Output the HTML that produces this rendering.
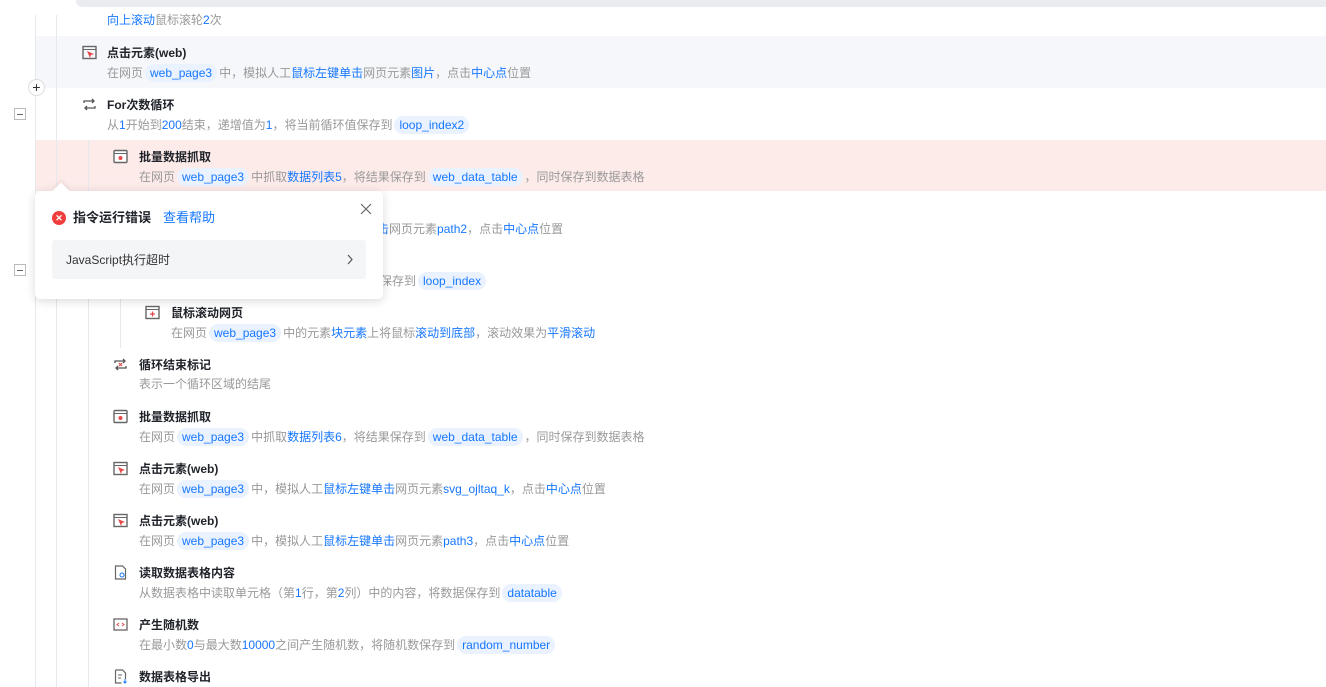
<!DOCTYPE html>
<html><head><meta charset="utf-8"><style>
*{margin:0;padding:0;box-sizing:border-box}
body{width:1326px;height:687px;overflow:hidden;background:#fff;position:relative;font-family:"Liberation Sans","Noto Sans CJK SC",sans-serif;font-size:12px}
.a{position:absolute;white-space:nowrap}
.t{font-weight:bold;color:#1f2329;font-size:12px;line-height:16px;margin-top:1px}
.d{color:#999;font-size:12px;line-height:18px;margin-top:1px}
.b{color:#1677ff}
.g{background:#eaf2ff;color:#1677ff;border-radius:9px;padding:0 5px;margin:0 2px;display:inline-block;line-height:18px}
.vl{position:absolute;width:1px;background:#e8e9ec}
.ic{position:absolute;width:15px;height:15px}
</style></head><body>
<div class="a" style="left:76px;top:0;width:1250px;height:7px;background:#ebecf0;border-bottom-left-radius:6px"></div>
<div class="a" style="left:35px;top:36px;width:1291px;height:52px;background:#f6f7fb"></div>
<div class="a" style="left:35px;top:140px;width:1291px;height:51px;background:#fdebea"></div>
<div class="vl" style="left:35px;top:15px;height:672px"></div>
<div class="vl" style="left:56px;top:15px;height:672px"></div>
<div class="vl" style="left:88px;top:140px;height:547px"></div>
<div class="vl" style="left:120px;top:190px;height:158px"></div>

<div class="a d" style="left:107px;top:10px"><span class="b">向上滚动</span>鼠标滚轮<span class="b">2</span>次</div>

<svg class="ic" style="left:82px;top:45px" viewBox="0 0 15 15"><rect x="1" y="1.5" width="13" height="12" fill="none" stroke="#666" stroke-width="1.4"/><line x1="1" y1="4.5" x2="14" y2="4.5" stroke="#666"/><path d="M5 6l3 7 1-3 3-1z" fill="#e84a4a"/></svg>
<div class="a t" style="left:107px;top:44px">点击元素(web)</div>
<div class="a d" style="left:107px;top:63px">在网页<span class="g">web_page3</span>中，模拟人工<span class="b">鼠标左键单击</span>网页元素<span class="b">图片</span>，点击<span class="b">中心点</span>位置</div>

<svg class="ic" style="left:82px;top:97px" viewBox="0 0 15 15"><path d="M2 6V4h10M10 2l2 2-2 2M13 9v2H3M5 13l-2-2 2-2" fill="none" stroke="#555" stroke-width="1.3"/></svg>
<div class="a t" style="left:107px;top:96px">For次数循环</div>
<div class="a d" style="left:107px;top:115px">从<span class="b">1</span>开始到<span class="b">200</span>结束，递增值为<span class="b">1</span>，将当前循环值保存到<span class="g">loop_index2</span></div>

<svg class="ic" style="left:113px;top:149px" viewBox="0 0 15 15"><rect x="1" y="1.5" width="13" height="12" rx="1" fill="#fff" stroke="#666" stroke-width="1.4"/><line x1="1" y1="4.5" x2="14" y2="4.5" stroke="#666"/><circle cx="7.5" cy="9" r="2" fill="#e84a4a"/></svg>
<div class="a t" style="left:139px;top:148px">批量数据抓取</div>
<div class="a d" style="left:139px;top:167px">在网页<span class="g">web_page3</span>中抓取<span class="b">数据列表5</span>，将结果保存到<span class="g">web_data_table</span>，同时保存到数据表格</div>

<div class="a d" style="left:377px;top:219px"><span class="b">击</span>网页元素<span class="b">path2</span>，点击<span class="b">中心点</span>位置</div>
<div class="a d" style="left:380px;top:271px">保存到<span class="g">loop_index</span></div>

<svg class="ic" style="left:145px;top:305px" viewBox="0 0 15 15"><rect x="1" y="1.5" width="13" height="12" fill="none" stroke="#666" stroke-width="1.4"/><line x1="1" y1="4.5" x2="14" y2="4.5" stroke="#666"/><path d="M7.5 6.5v5M5 9h5" stroke="#e84a4a" stroke-width="1.3"/></svg>
<div class="a t" style="left:171px;top:304px">鼠标滚动网页</div>
<div class="a d" style="left:171px;top:323px">在网页<span class="g">web_page3</span>中的元素<span class="b">块元素</span>上将鼠标<span class="b">滚动到底部</span>，滚动效果为<span class="b">平滑滚动</span></div>

<svg class="ic" style="left:113px;top:357px" viewBox="0 0 15 15"><path d="M2 6V4h10M10 2l2 2-2 2M13 9v2H3M5 13l-2-2 2-2" fill="none" stroke="#555" stroke-width="1.3"/><path d="M6 6l3 3M9 6l-3 3" stroke="#e84a4a" stroke-width="1.2"/></svg>
<div class="a t" style="left:139px;top:356px">循环结束标记</div>
<div class="a d" style="left:139px;top:374px">表示一个循环区域的结尾</div>

<svg class="ic" style="left:113px;top:409px" viewBox="0 0 15 15"><rect x="1" y="1.5" width="13" height="12" rx="1" fill="#fff" stroke="#666" stroke-width="1.4"/><line x1="1" y1="4.5" x2="14" y2="4.5" stroke="#666"/><circle cx="7.5" cy="9" r="2" fill="#e84a4a"/></svg>
<div class="a t" style="left:139px;top:408px">批量数据抓取</div>
<div class="a d" style="left:139px;top:427px">在网页<span class="g">web_page3</span>中抓取<span class="b">数据列表6</span>，将结果保存到<span class="g">web_data_table</span>，同时保存到数据表格</div>

<svg class="ic" style="left:113px;top:461px" viewBox="0 0 15 15"><rect x="1" y="1.5" width="13" height="12" fill="none" stroke="#666" stroke-width="1.4"/><line x1="1" y1="4.5" x2="14" y2="4.5" stroke="#666"/><path d="M5 6l3 7 1-3 3-1z" fill="#e84a4a"/></svg>
<div class="a t" style="left:139px;top:460px">点击元素(web)</div>
<div class="a d" style="left:139px;top:479px">在网页<span class="g">web_page3</span>中，模拟人工<span class="b">鼠标左键单击</span>网页元素<span class="b">svg_ojltaq_k</span>，点击<span class="b">中心点</span>位置</div>

<svg class="ic" style="left:113px;top:513px" viewBox="0 0 15 15"><rect x="1" y="1.5" width="13" height="12" fill="none" stroke="#666" stroke-width="1.4"/><line x1="1" y1="4.5" x2="14" y2="4.5" stroke="#666"/><path d="M5 6l3 7 1-3 3-1z" fill="#e84a4a"/></svg>
<div class="a t" style="left:139px;top:512px">点击元素(web)</div>
<div class="a d" style="left:139px;top:531px">在网页<span class="g">web_page3</span>中，模拟人工<span class="b">鼠标左键单击</span>网页元素<span class="b">path3</span>，点击<span class="b">中心点</span>位置</div>

<svg class="ic" style="left:113px;top:565px" viewBox="0 0 15 15"><path d="M2.5 1h7l3 3v10h-10z" fill="none" stroke="#666" stroke-width="1.2"/><circle cx="9" cy="10" r="2" fill="none" stroke="#1677ff"/></svg>
<div class="a t" style="left:139px;top:564px">读取数据表格内容</div>
<div class="a d" style="left:139px;top:583px">从数据表格中读取单元格（第<span class="b">1</span>行，第<span class="b">2</span>列）中的内容，将数据保存到<span class="g">datatable</span></div>

<svg class="ic" style="left:113px;top:617px" viewBox="0 0 15 15"><rect x="1" y="2" width="13" height="11" fill="none" stroke="#666" stroke-width="1.3"/><path d="M6 6l-2 1.5 2 1.5M9 6l2 1.5-2 1.5" fill="none" stroke="#e84a4a"/></svg>
<div class="a t" style="left:139px;top:616px">产生随机数</div>
<div class="a d" style="left:139px;top:635px">在最小数<span class="b">0</span>与最大数<span class="b">10000</span>之间产生随机数，将随机数保存到<span class="g">random_number</span></div>

<svg class="ic" style="left:113px;top:669px" viewBox="0 0 15 15"><path d="M2.5 1h7l3 3v6M2.5 1v13h6" fill="none" stroke="#666" stroke-width="1.2"/><path d="M5 6h4M5 9h3" stroke="#666"/><path d="M12 10v4M10.5 12.5l1.5 1.5 1.5-1.5" fill="none" stroke="#1677ff"/></svg>
<div class="a t" style="left:139px;top:668px">数据表格导出</div>

<div class="a" style="left:28px;top:79px;width:17px;height:17px;border-radius:50%;border:1px solid #ddd;background:#fff;text-align:center;line-height:14px;font-size:14px;color:#333">+</div>
<div class="a" style="left:14px;top:108px;width:12px;height:12px;border:1px solid #bbb;background:#fff"><div style="position:absolute;left:2px;top:5px;width:6px;height:1px;background:#666"></div></div>
<div class="a" style="left:14px;top:264px;width:12px;height:12px;border:1px solid #bbb;background:#fff"><div style="position:absolute;left:2px;top:5px;width:6px;height:1px;background:#666"></div></div>

<div class="a" style="left:35px;top:191px;width:348px;height:108px;background:#fff;border-radius:5px;box-shadow:0 2px 10px rgba(0,0,0,0.15)"></div>
<div class="a" style="left:55px;top:185px;width:12px;height:12px;background:#fff;transform:rotate(45deg);box-shadow:-2px -2px 4px rgba(0,0,0,0.06)"></div>
<div class="a" style="left:52px;top:211px;width:14px;height:14px;border-radius:50%;background:#f03e3e;color:#fff;font-size:9px;font-weight:bold;text-align:center;line-height:14px">✕</div>
<div class="a" style="left:73px;top:209px;font-size:13px;font-weight:bold;color:#1f2329;line-height:18px">指令运行错误</div>
<div class="a" style="left:163px;top:209px;font-size:13px;color:#1677ff;line-height:18px">查看帮助</div>
<svg class="a" style="left:360px;top:203px" width="12" height="12" viewBox="0 0 12 12"><path d="M1 1l10 10M11 1L1 11" stroke="#666" stroke-width="1.2"/></svg>
<div class="a" style="left:52px;top:240px;width:314px;height:39px;background:#f4f5f7;border-radius:3px"></div>
<div class="a" style="left:66px;top:251px;font-size:12px;color:#333;line-height:18px">JavaScript执行超时</div>
<svg class="a" style="left:346px;top:254px" width="8" height="11" viewBox="0 0 8 11"><path d="M2 1l4 4.5L2 10" fill="none" stroke="#555" stroke-width="1.2"/></svg>
</body></html>
